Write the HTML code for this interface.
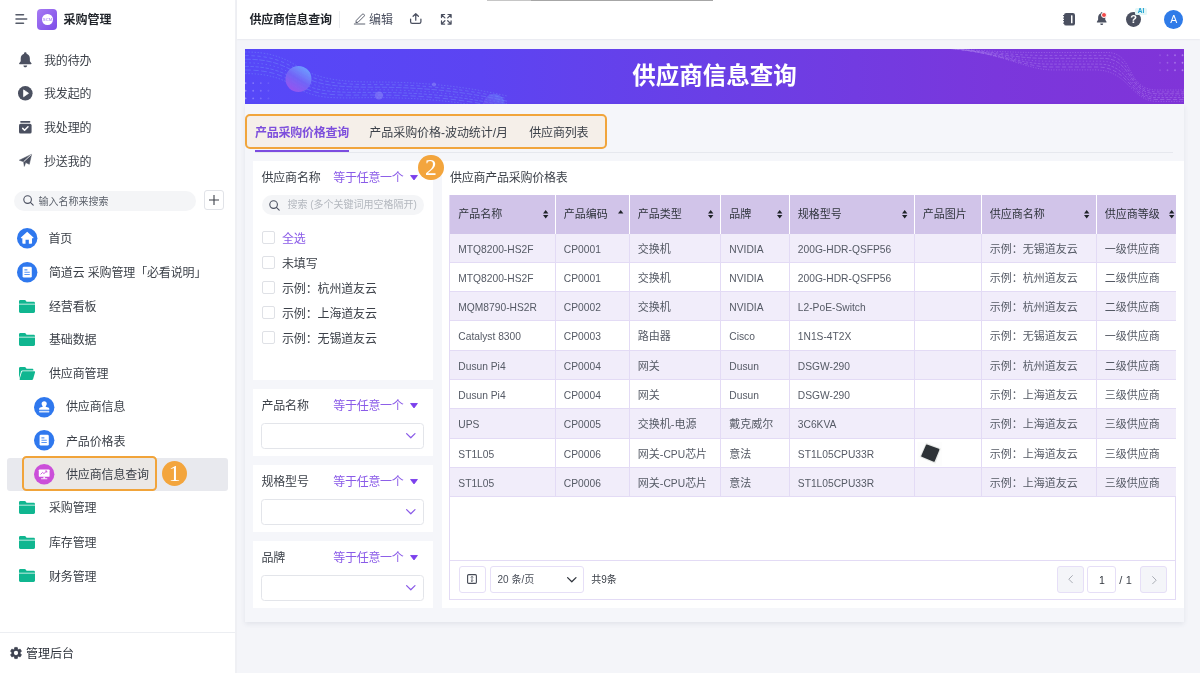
<!DOCTYPE html>
<html lang="zh-CN">
<head>
<meta charset="utf-8">
<title>供应商信息查询</title>
<style>
*{box-sizing:border-box;margin:0;padding:0}
html,body{width:1200px;height:673px;overflow:hidden}
body{position:relative;will-change:transform;background:#f4f5f9;font-family:"Liberation Sans","Noto Sans CJK SC",sans-serif;font-size:12px;color:#3c4149;line-height:1}
.abs{position:absolute}
.t{position:absolute;white-space:nowrap;line-height:16px;height:16px}
svg{position:absolute;display:block;overflow:visible}
/* sidebar */
#side{position:absolute;left:0;top:0;width:237px;height:673px;background:#fff;border-right:2px solid #eff0f4}
.mi{color:#3c4149;letter-spacing:-.15px}
/* header */
#head{position:absolute;left:237px;top:0;width:963px;height:39.200px;background:#fff;box-shadow:0 1px 1.500px rgba(60,70,100,.06)}
/* main */
#banner{position:absolute;left:245px;top:49px;width:939px;height:54.500px;overflow:hidden;background:linear-gradient(90deg,#5648f8 0%,#5c44f2 25%,#6a3fe6 50%,#7a37dc 80%,#8034d8 100%)}
#card{position:absolute;left:245px;top:103.500px;width:939px;height:518.500px;background:#f5f6fa;box-shadow:0 2px 5px rgba(40,50,90,.09)}
.panel{position:absolute;background:#fff}
.pur{color:#8a55e6}
.lbl{color:#3c4149;letter-spacing:-.15px}
.cb{position:absolute;left:261.500px;width:13.400px;height:13.400px;border:1px solid #dfe1e6;border-radius:2px;background:#fff}
.sel{position:absolute;left:261px;width:163.300px;height:26.600px;border:1px solid #e3e5ea;border-radius:3.500px;background:#fff}
.ph{position:absolute;left:450px;height:38.400px;top:195.200px;background:#d1c4e9}
.tr{position:absolute;left:450px;width:725.500px;overflow:hidden;height:29.280px}
.tc{position:absolute;top:0;height:100%;border-right:1px solid #e3dbf5;border-bottom:1px solid #e3dbf5;padding-left:8.300px;font-size:11px;line-height:30.800px;white-space:nowrap;color:#555a65;overflow:hidden}
.tc i{font-style:normal;font-size:10.250px}
.th{position:absolute;top:195.200px;height:38.400px;padding-left:8.300px;font-size:11px;line-height:39.600px;white-space:nowrap;color:#2f343c;border-right:1px solid #fff}
.pb{position:absolute;top:566px;height:27px;border:1px solid #e6dff7;border-radius:3px;background:#fff}

</style>
</head>
<body>

<!-- ================= SIDEBAR ================= -->
<div id="side">
  <!-- hamburger -->
  <svg style="left:16.300px;top:14px" width="12" height="10" viewBox="0 0 12 10"><path d="M0 .750H7.500M0 5H10.700M0 9.250H7.500" stroke="#555b69" stroke-width="1.500" stroke-linecap="round" fill="none"/></svg>
  <!-- logo -->
  <div class="abs" style="left:37px;top:9px;width:20.200px;height:20.600px;border-radius:4px;background:linear-gradient(135deg,#a77bf3,#7c4be8)"></div>
  <div class="abs" style="left:42.100px;top:13.900px;width:10.800px;height:10.800px;border-radius:50%;background:#fff"></div>
  <div class="t" style="left:63.5px;top:12px;font-weight:bold;color:#1f2329;font-size:12px">采购管理</div>

  <div class="t mi" style="left:44px;top:52.5px">我的待办</div>
  <div class="t mi" style="left:44px;top:86px">我发起的</div>
  <div class="t mi" style="left:44px;top:120px">我处理的</div>
  <div class="t mi" style="left:44px;top:153.5px">抄送我的</div>

  <!-- search -->
  <div class="abs" style="left:14px;top:191px;width:182px;height:20px;border-radius:10px;background:#f4f5f7"></div>
  <div class="t" style="left:38.5px;top:193.5px;font-size:10px;color:#5b616b">输入名称来搜索</div>
  <div class="abs" style="left:204px;top:190px;width:20px;height:20px;border:1px solid #e1e3e8;border-radius:3px;background:#fff"></div>


  <!-- logo text -->
  <div class="t" style="left:42.100px;top:14.600px;width:10.800px;height:10.800px;line-height:10.800px;text-align:center;font-size:4.300px;font-weight:bold;color:#b79cf5;letter-spacing:-.1px">SCM</div>
  <!-- bell -->
  <svg style="left:18.200px;top:51.600px" width="14.600" height="15.600" viewBox="0 0 14 15"><path d="M7 0.2c.7 0 1.2.5 1.2 1.1v.4c2 .6 3.200 2.300 3.200 4.500v2.600l1.500 2.100c.3.400 0 .9-.5.9H1.600c-.5 0-.8-.5-.5-.9l1.500-2.100V6.200c0-2.200 1.200-3.900 3.200-4.500v-.4C5.800.7 6.300.2 7 .2z" fill="#4b5060"/><path d="M5.200 12.900h3.600c0 1-.8 1.800-1.800 1.800s-1.800-.8-1.800-1.800z" fill="#4b5060"/></svg>
  <!-- play -->
  <svg style="left:18px;top:86px" width="14.600" height="14.600" viewBox="0 0 14.600 14.600"><circle cx="7.300" cy="7.300" r="7.300" fill="#4b5060"/><path d="M5.600 3.900L10.500 7.300L5.600 10.700z" fill="#fff" stroke="#fff" stroke-width=".8" stroke-linejoin="round"/></svg>
  <!-- processed -->
  <svg style="left:19px;top:120.500px" width="12.600" height="12.500" viewBox="0 0 12.600 12.500"><rect x="1.200" y="0" width="10.200" height="1.700" rx=".8" fill="#4b5060"/><rect x="0" y="2.800" width="12.600" height="9.700" rx="1.600" fill="#4b5060"/><path d="M3.700 7.400L5.600 9.300L9 5.800" stroke="#fff" stroke-width="1.500" fill="none" stroke-linecap="round" stroke-linejoin="round"/></svg>
  <!-- plane -->
  <svg style="left:19px;top:154px" width="12.800" height="12.800" viewBox="0 0 12.800 12.800"><path d="M12.600.3L10.300 10.300L6.700 8.600L5.300 12.400L4.600 7.800L.3 6.200z" fill="#4b5060" stroke="#4b5060" stroke-width=".5" stroke-linejoin="round"/><path d="M12.400.5L4.700 7.700" stroke="#fff" stroke-width=".9"/></svg>
  <!-- search icon -->
  <svg style="left:23px;top:195px" width="11" height="11" viewBox="0 0 11 11"><circle cx="4.600" cy="4.600" r="3.800" stroke="#4b5060" stroke-width="1.100" fill="none"/><path d="M7.400 7.400L10.200 10.200" stroke="#4b5060" stroke-width="1.100" stroke-linecap="round"/></svg>
  <!-- plus -->
  <svg style="left:209px;top:195px" width="10" height="10" viewBox="0 0 10 10"><path d="M5 0V10M0 5H10" stroke="#3c4149" stroke-width="1.100"/></svg>

  <!-- home -->
  <svg style="left:16.700px;top:228.100px" width="20.400" height="20.400" viewBox="0 0 20.400 20.400"><circle cx="10.200" cy="10.200" r="10.200" fill="#2f78ee"/><path transform="translate(10.2 10.2) scale(1.1) translate(-10.2 -10.2)" d="M10.200 4.300L15.900 9.600C16.100 9.800 16 10.200 15.700 10.200H14.600V14.600C14.600 15 14.300 15.300 13.900 15.300H11.700V11.700H8.700V15.300H6.500C6.100 15.300 5.800 15 5.800 14.600V10.200H4.700C4.400 10.200 4.300 9.800 4.500 9.600Z" fill="#fff"/></svg>
  <svg style="left:16.7px;top:262px" width="20.400" height="20.400" viewBox="0 0 20.400 20.400"><circle cx="10.200" cy="10.200" r="10.200" fill="#2f78ee"/><rect x="5.600" y="4.800" width="9.200" height="10.800" rx="1.300" fill="#fff"/><path d="M7.400 7.900H10.400M7.400 10.200H12.800M7.400 12.500H12.800" stroke="#5b97f5" stroke-width="1.100"/></svg>
  <svg style="left:19px;top:299.7px" width="16" height="13" viewBox="0 0 16 13"><path d="M1.300 0H5.600C6.200 0 6.600.3 6.900.8L7.500 1.800H14.700C15.400 1.800 16 2.400 16 3.100V3.700H0V1.300C0 .6.600 0 1.300 0Z" fill="#10b690"/><path d="M0 4.500H16V11.500C16 12.300 15.400 12.900 14.600 12.900H1.400C.6 12.900 0 12.300 0 11.500Z" fill="#10b690"/></svg>
  <svg style="left:19px;top:333.2px" width="16" height="13" viewBox="0 0 16 13"><path d="M1.300 0H5.600C6.200 0 6.600.3 6.900.8L7.500 1.800H14.700C15.400 1.800 16 2.400 16 3.100V3.700H0V1.300C0 .6.600 0 1.300 0Z" fill="#10b690"/><path d="M0 4.500H16V11.500C16 12.300 15.400 12.900 14.600 12.900H1.400C.6 12.900 0 12.300 0 11.500Z" fill="#10b690"/></svg>
  <svg style="left:19px;top:367px" width="16" height="13" viewBox="0 0 16 13"><path d="M1.300 0H5.600C6.200 0 6.600.3 6.900.8L7.500 1.800H13.200C13.900 1.800 14.400 2.300 14.400 3V3.400H3.600C2.800 3.400 2.200 3.900 2 4.600L0 11.500V1.300C0 .6.600 0 1.300 0Z" fill="#10b690"/><path d="M3.800 4.300H15.200C15.800 4.300 16.200 4.800 16 5.400L14.100 12C13.900 12.500 13.500 12.900 12.900 12.900H1.100C.8 12.900.5 12.600.6 12.200L2.700 5.200C2.800 4.700 3.300 4.300 3.800 4.300Z" fill="#10b690"/></svg>
  <!-- stamp/user -->
  <svg style="left:33.600px;top:396.500px" width="20.400" height="20.400" viewBox="0 0 20.400 20.400"><circle cx="10.200" cy="10.200" r="10.200" fill="#2f78ee"/><path d="M10.200 4.200C11.700 4.200 12.800 5.300 12.800 6.700C12.800 7.600 12.300 8.300 11.900 8.900C11.600 9.400 11.800 9.900 12.400 10.100L14.200 10.500C14.900 10.700 15.300 11.200 15.300 11.900V12.800H5.100V11.900C5.100 11.200 5.500 10.700 6.200 10.500L8 10.100C8.600 9.900 8.800 9.400 8.500 8.900C8.100 8.300 7.600 7.600 7.600 6.700C7.600 5.300 8.700 4.200 10.200 4.200Z" fill="#fff"/><rect x="5.100" y="13.800" width="10.200" height="1.700" rx=".4" fill="#fff" opacity=".8"/></svg>
  <svg style="left:33.6px;top:430px" width="20.400" height="20.400" viewBox="0 0 20.400 20.400"><circle cx="10.200" cy="10.200" r="10.200" fill="#2f78ee"/><rect x="5.600" y="4.800" width="9.200" height="10.800" rx="1.300" fill="#fff"/><path d="M7.400 7.900H10.400M7.400 10.200H12.800M7.400 12.500H12.800" stroke="#5b97f5" stroke-width="1.100"/></svg>
  <div class="t mi" style="left:48.5px;top:231px">首页</div>
  <div class="t mi" style="left:49px;top:265px">简道云 采购管理「必看说明」</div>
  <div class="t mi" style="left:49px;top:299px">经营看板</div>
  <div class="t mi" style="left:49px;top:332px">基础数据</div>
  <div class="t mi" style="left:49px;top:366px">供应商管理</div>
  <div class="t mi" style="left:66px;top:399px">供应商信息</div>
  <div class="t mi" style="left:66px;top:433.5px">产品价格表</div>

  <div class="abs" style="left:7px;top:458px;width:221px;height:33px;border-radius:3px;background:#e8e9ee"></div>
  <div class="abs" style="left:22px;top:456px;width:135px;height:35px;border-radius:4.500px;border:2.300px solid #f1a43a;background:#ebe8e5"></div>
  <div class="t mi" style="left:66px;top:467px">供应商信息查询</div>
  <div class="abs" style="left:162px;top:461px;width:25px;height:25px;border-radius:50%;background:#f3a53d"></div>
  <div class="t" style="left:162px;top:461px;width:25px;height:25px;line-height:25px;text-align:center;color:#fff;font-family:'Liberation Serif',serif;font-size:23.500px">1</div>


  <!-- dashboard icon -->
  <svg style="left:33.600px;top:463.500px" width="20.400" height="20.400" viewBox="0 0 20.400 20.400"><circle cx="10.200" cy="10.200" r="10.200" fill="#cb4fd9"/><rect x="4.800" y="5.400" width="10.800" height="7.400" rx=".9" fill="#fff"/><path d="M6.600 10.400L8.600 8.400L9.900 9.600L12.600 7.200M11.200 7H12.800V8.600" stroke="#cb4fd9" stroke-width=".9" fill="none"/><path d="M9.300 12.800H11.100V14.200H13.300V15.300H7.100V14.200H9.300Z" fill="#fff" opacity=".85"/></svg>
<svg style="left:19px;top:501.2px" width="16" height="13" viewBox="0 0 16 13"><path d="M1.300 0H5.600C6.200 0 6.600.3 6.900.8L7.500 1.800H14.700C15.400 1.800 16 2.400 16 3.100V3.700H0V1.300C0 .6.600 0 1.300 0Z" fill="#10b690"/><path d="M0 4.500H16V11.500C16 12.300 15.400 12.900 14.600 12.900H1.400C.6 12.900 0 12.300 0 11.500Z" fill="#10b690"/></svg>
  <svg style="left:19px;top:535.5px" width="16" height="13" viewBox="0 0 16 13"><path d="M1.300 0H5.600C6.200 0 6.600.3 6.900.8L7.500 1.800H14.700C15.400 1.800 16 2.400 16 3.100V3.700H0V1.300C0 .6.600 0 1.300 0Z" fill="#10b690"/><path d="M0 4.500H16V11.500C16 12.300 15.400 12.900 14.600 12.900H1.400C.6 12.900 0 12.300 0 11.500Z" fill="#10b690"/></svg>
  <svg style="left:19px;top:569.2px" width="16" height="13" viewBox="0 0 16 13"><path d="M1.300 0H5.600C6.200 0 6.600.3 6.900.8L7.500 1.800H14.700C15.400 1.800 16 2.400 16 3.100V3.700H0V1.300C0 .6.600 0 1.300 0Z" fill="#10b690"/><path d="M0 4.500H16V11.500C16 12.300 15.400 12.900 14.600 12.900H1.400C.6 12.900 0 12.300 0 11.500Z" fill="#10b690"/></svg>
  <!-- gear -->
  <svg style="left:9.800px;top:646.600px" width="12" height="12" viewBox="0 0 12 12"><path d="M4.33 2.25L4.72 0.45L7.28 0.45L7.67 2.25L8.41 2.68L10.17 2.11L11.45 4.33L10.08 5.57L10.08 6.43L11.45 7.67L10.17 9.89L8.41 9.32L7.67 9.75L7.28 11.55L4.72 11.55L4.33 9.75L3.59 9.32L1.83 9.89L0.55 7.67L1.92 6.43L1.92 5.57L0.55 4.33L1.83 2.11L3.59 2.68Z" fill="#3d4250" stroke="#3d4250" stroke-width=".7" stroke-linejoin="round"/><circle cx="6" cy="6" r="2.150" fill="#fff"/></svg>
  <div class="t mi" style="left:49px;top:500px">采购管理</div>
  <div class="t mi" style="left:49px;top:535px">库存管理</div>
  <div class="t mi" style="left:49px;top:568.5px">财务管理</div>

  <div class="abs" style="left:0;top:632px;width:235px;height:1px;background:#eceef2"></div>
  <div class="t" style="left:26px;top:646px;color:#2b3039">管理后台</div>
</div>

<!-- ================= HEADER ================= -->
<div id="head"></div>
<div class="abs" style="left:487px;top:0;width:226px;height:1px;background:linear-gradient(90deg,#c6c6c6 0,#c6c6c6 44px,#a6a6a6 44px)"></div>
<div class="t" style="left:249.500px;top:12px;font-weight:bold;color:#1f2329;letter-spacing:-.25px">供应商信息查询</div>
<div class="abs" style="left:339px;top:11px;width:1px;height:17px;background:#ebedf0"></div>
<!-- pencil -->
<svg style="left:354px;top:13px" width="11.500" height="11.500" viewBox="0 0 11.500 11.500"><path d="M2.300 7.400L8.300 1.200C8.700.8 9.300.8 9.700 1.200L10.200 1.700C10.600 2.100 10.600 2.700 10.200 3.100L4.100 9.200L1.900 9.700Z" stroke="#4b5060" stroke-width=".9" fill="none" stroke-linejoin="round"/><path d="M.3 11H10.800" stroke="#4b5060" stroke-width=".9" stroke-linecap="round"/></svg>
<div class="t" style="left:369px;top:12px;color:#4b5060">编辑</div>
<!-- upload -->
<svg style="left:409.500px;top:13.300px" width="11.500" height="11" viewBox="0 0 11.500 11"><path d="M5.750 7.200V.8M3.100 3.300L5.750.7L8.400 3.300" stroke="#4b5060" stroke-width="1.250" fill="none" stroke-linecap="round" stroke-linejoin="round"/><path d="M.6 6V8.800C.6 9.700 1.300 10.400 2.200 10.400H9.300C10.200 10.400 10.900 9.700 10.900 8.800V6" stroke="#4b5060" stroke-width="1.250" fill="none" stroke-linecap="round"/></svg>
<!-- fullscreen -->
<svg style="left:440.500px;top:13.500px" width="10.600" height="10.600" viewBox="0 0 10.600 10.600"><path d="M.5 3.600V.5H3.600M.7.700L3.900 3.900M7 .5H10.100V3.600M9.900.7L6.700 3.900M.5 7V10.100H3.600M.7 9.900L3.900 6.700M10.100 7V10.100H7M9.900 9.900L6.700 6.700" stroke="#4b5060" stroke-width="1.250" fill="none" stroke-linecap="round" stroke-linejoin="round"/></svg>
<!-- notebook -->
<svg style="left:1063px;top:12.500px" width="12" height="12.600" viewBox="0 0 12 12.600"><rect x="1" y="0" width="11" height="12.600" rx="2.200" fill="#4b5060"/><path d="M0 2.600H2M0 5.100H2M0 7.600H2M0 10.100H2" stroke="#4b5060" stroke-width="1"/><rect x="8" y="2.300" width="1.500" height="8" rx=".4" fill="#fff"/></svg>
<!-- bell -->
<svg style="left:1095.500px;top:12.400px" width="11.400" height="13.400" viewBox="0 0 14 15" preserveAspectRatio="none"><path d="M7 0.200c.7 0 1.200.5 1.200 1.100v.4c2 .6 3.200 2.300 3.200 4.500v2.600l1.500 2.100c.3.400 0 .9-.5.900H1.600c-.5 0-.8-.5-.5-.9l1.500-2.100V6.200c0-2.200 1.200-3.900 3.200-4.500v-.4C5.800.7 6.300.2 7 .2z" fill="#4b5060"/><path d="M5.200 12.900h3.600c0 1-.8 1.800-1.800 1.800s-1.800-.8-1.800-1.800z" fill="#4b5060"/></svg>
<div class="abs" style="left:1100.700px;top:11.600px;width:6.400px;height:6.400px;border-radius:50%;background:#f04848;border:.6px solid #fff"></div>
<!-- help -->
<div class="abs" style="left:1126.200px;top:12px;width:14.800px;height:14.800px;border-radius:50%;background:#4b5060"></div>
<div class="t" style="left:1126.200px;top:12px;width:14.800px;height:14.800px;line-height:15.500px;text-align:center;color:#fff;font-weight:bold;font-size:11px">?</div>
<div class="abs" style="left:1135px;top:8.300px;width:12.200px;height:6.400px;border-radius:1.500px;background:#e2f6f7"></div>
<div class="t" style="left:1135px;top:8.300px;width:12.200px;height:6.400px;line-height:6.800px;text-align:center;color:#1a9fd0;font-weight:bold;font-size:6.500px">AI</div>
<!-- avatar -->
<div class="abs" style="left:1164.400px;top:10px;width:18.800px;height:18.800px;border-radius:50%;background:#2f7be8"></div>
<div class="t" style="left:1164.400px;top:10px;width:18.800px;height:18.800px;line-height:19.500px;text-align:center;color:#fff;font-size:10.500px">A</div>

<!-- ================= BANNER ================= -->
<div id="banner">
<svg style="left:0;top:0" width="939" height="55" viewBox="0 0 939 55">
  <defs>
    <linearGradient id="sph" x1=".8" y1=".1" x2=".25" y2=".95"><stop offset="0" stop-color="#6fa4ff"/><stop offset=".5" stop-color="#7466f6"/><stop offset="1" stop-color="#9c56ee"/></linearGradient>
  </defs>
  <g fill="none" stroke="#8fd0ff" stroke-width=".7" opacity=".34"><path d="M0 3.0C22 3.0 36 7.0 52 17.0C72 30.0 95 33.0 130 33.0C170 33.0 215 36.0 262 47.0" stroke-dasharray="1.5 1.6"/><path d="M0 6.6C22 6.6 36 10.6 52 20.6C72 33.6 95 35.6 130 35.6C170 35.6 215 38.6 262 49.6" stroke-dasharray="3.5 2.6"/><path d="M0 10.2C22 10.2 36 14.2 52 24.2C72 37.2 95 38.2 130 38.2C170 38.2 215 41.2 262 52.2" stroke-dasharray="5.5 1.6"/><path d="M0 13.8C22 13.8 36 17.8 52 27.8C72 40.8 95 40.8 130 40.8C170 40.8 215 43.8 262 54.8" stroke-dasharray="1.5 2.6"/><path d="M0 17.4C22 17.4 36 21.4 52 31.4C72 44.4 95 43.4 130 43.4C170 43.4 215 46.4 262 57.4" stroke-dasharray="3.5 1.6"/><path d="M0 21.0C22 21.0 36 25.0 52 35.0C72 48.0 95 46.0 130 46.0C170 46.0 215 49.0 262 60.0" stroke-dasharray="5.5 2.6"/><path d="M0 24.6C22 24.6 36 28.6 52 38.6C72 51.6 95 48.6 130 48.6C170 48.6 215 51.6 262 62.6" stroke-dasharray="1.5 1.6"/></g>
  <g fill="#b9b4ff" opacity=".6"><circle cx="0.6" cy="34.1" r=".95" opacity="1.00"/><circle cx="8.2" cy="34.1" r=".95" opacity="0.78"/><circle cx="15.8" cy="34.1" r=".95" opacity="0.56"/><circle cx="23.4" cy="34.1" r=".95" opacity="0.34"/><circle cx="0.6" cy="41.8" r=".95" opacity="1.00"/><circle cx="8.2" cy="41.8" r=".95" opacity="0.78"/><circle cx="15.8" cy="41.8" r=".95" opacity="0.56"/><circle cx="23.4" cy="41.8" r=".95" opacity="0.34"/><circle cx="0.6" cy="49.4" r=".95" opacity="1.00"/><circle cx="8.2" cy="49.4" r=".95" opacity="0.78"/><circle cx="15.8" cy="49.4" r=".95" opacity="0.56"/><circle cx="23.4" cy="49.4" r=".95" opacity="0.34"/></g>
  <circle cx="53.500" cy="30" r="13" fill="url(#sph)" opacity=".92"/>
  <circle cx="134" cy="46.500" r="4" fill="#8f8cf8" opacity=".5"/>
  <circle cx="189" cy="35.500" r="2" fill="#8f8cf8" opacity=".55"/>
  <circle cx="249" cy="56" r="11" fill="url(#sph)" opacity=".38"/>
  <g fill="none" stroke="#d9c4ff" stroke-width=".6" opacity=".42"><path d="M700 -1.0C740 2.0 765 3.5 795 3.5L862 3.5C890 3.5 880 41.0 912 41.0L939 41.0" stroke-dasharray="1.2 1.4"/><path d="M702 -0.8C743 2.5 768 6.4 797 6.4L860 6.4C889 6.4 881 42.9 912 42.9L939 42.9" stroke-dasharray="2.7 2.2"/><path d="M704 -0.6C746 3.0 771 9.3 799 9.3L858 9.3C888 9.3 882 44.8 912 44.8L939 44.8" stroke-dasharray="4.2 1.4"/><path d="M706 -0.4C749 3.5 774 12.2 801 12.2L856 12.2C887 12.2 883 46.7 912 46.7L939 46.7" stroke-dasharray="1.2 2.2"/><path d="M708 -0.2C752 4.0 777 15.1 803 15.1L854 15.1C886 15.1 884 48.6 912 48.6L939 48.6" stroke-dasharray="2.7 1.4"/><path d="M710 0.0C755 4.5 780 18.0 805 18.0L852 18.0C885 18.0 885 50.5 912 50.5L939 50.5" stroke-dasharray="4.2 2.2"/><path d="M712 0.2C758 5.0 783 20.9 807 20.9L850 20.9C884 20.9 886 52.4 912 52.4L939 52.4" stroke-dasharray="1.2 1.4"/></g>
  <g fill="#d9c4ff" opacity=".55"><circle cx="915.0" cy="6.25" r=".9" opacity="0.35"/><circle cx="922.5" cy="6.25" r=".9" opacity="0.55"/><circle cx="930.0" cy="6.25" r=".9" opacity="0.75"/><circle cx="937.5" cy="6.25" r=".9" opacity="0.95"/><circle cx="915.0" cy="13.75" r=".9" opacity="0.35"/><circle cx="922.5" cy="13.75" r=".9" opacity="0.55"/><circle cx="930.0" cy="13.75" r=".9" opacity="0.75"/><circle cx="937.5" cy="13.75" r=".9" opacity="0.95"/><circle cx="915.0" cy="21.25" r=".9" opacity="0.35"/><circle cx="922.5" cy="21.25" r=".9" opacity="0.55"/><circle cx="930.0" cy="21.25" r=".9" opacity="0.75"/><circle cx="937.5" cy="21.25" r=".9" opacity="0.95"/></g>
</svg>
  <div class="t" style="left:0;width:939px;top:12px;height:30px;line-height:30px;text-align:center;color:#fff;font-weight:bold;font-size:23.5px">供应商信息查询</div>
</div>

<!-- ================= CARD ================= -->
<div id="card"></div>

<!-- tabs -->
<div class="abs" style="left:245px;top:114.300px;width:361.500px;height:35px;border:2.300px solid #f1a53c;border-radius:5px;background:#f5efe9"></div>
<div class="t" style="left:255px;top:124.500px;font-weight:bold;color:#7d4fdc;letter-spacing:-.25px">产品采购价格查询</div>
<div class="t lbl" style="left:369.300px;top:124.500px;letter-spacing:-.05px">产品采购价格-波动统计/月</div>
<div class="t lbl" style="left:529.300px;top:124.500px;letter-spacing:-.2px">供应商列表</div>
<div class="abs" style="left:255px;top:152px;width:918px;height:1px;background:#e6e8ee"></div>
<div class="abs" style="left:255px;top:149.500px;width:94px;height:2.500px;background:#7c4ce0"></div>

<!-- filter 1 -->
<div class="panel" style="left:253px;top:161px;width:180px;height:219px"></div>
<div class="t lbl" style="left:261.500px;top:170.100px;letter-spacing:-.2px">供应商名称</div>
<div class="t" style="left:333.300px;top:170.100px;color:#8a5be8;letter-spacing:-.3px">等于任意一个</div>
<svg style="left:409.6px;top:175.4px" width="8" height="5.400" viewBox="0 0 8 5.400"><path d="M.6.500H7.400L4 4.900Z" fill="#7b3fec" stroke="#7b3fec" stroke-width=".9" stroke-linejoin="round"/></svg>
<div class="abs" style="left:261.500px;top:195px;width:162.500px;height:19.500px;border-radius:10px;background:#f4f5f7"></div>
<svg style="left:269.300px;top:199.500px" width="11" height="11" viewBox="0 0 11 11"><circle cx="4.600" cy="4.600" r="3.800" stroke="#4b5060" stroke-width="1.100" fill="none"/><path d="M7.400 7.400L10.200 10.200" stroke="#4b5060" stroke-width="1.100" stroke-linecap="round"/></svg>
<div class="t" style="left:287.500px;top:197px;font-size:10px;color:#b4b8bf;letter-spacing:0">搜索 (多个关键词用空格隔开)</div>
<div class="cb" style="top:230.6px"></div><div class="t lbl" style="left:282px;top:230.8px;color:#8a5be8">全选</div>
<div class="cb" style="top:255.6px"></div><div class="t lbl" style="left:282px;top:255.8px;">未填写</div>
<div class="cb" style="top:280.6px"></div><div class="t lbl" style="left:282px;top:280.8px;">示例：杭州道友云</div>
<div class="cb" style="top:305.6px"></div><div class="t lbl" style="left:282px;top:305.8px;">示例：上海道友云</div>
<div class="cb" style="top:330.6px"></div><div class="t lbl" style="left:282px;top:330.8px;">示例：无锡道友云</div>

<!-- filter 2 -->
<div class="panel" style="left:253px;top:389px;width:180px;height:67px"></div>
<div class="t lbl" style="left:261.500px;top:397.7px;letter-spacing:-.2px">产品名称</div>
<div class="t" style="left:333.300px;top:397.7px;color:#8a5be8;letter-spacing:-.3px">等于任意一个</div>
<svg style="left:409.6px;top:403.3px" width="8" height="5.400" viewBox="0 0 8 5.400"><path d="M.6.500H7.400L4 4.900Z" fill="#7b3fec" stroke="#7b3fec" stroke-width=".9" stroke-linejoin="round"/></svg>
<div class="sel" style="top:422.6px"></div>
<svg style="left:406px;top:433.3px" width="9.600" height="5.600" viewBox="0 0 9.600 5.600"><path d="M.6.600L4.800 4.800L9 .600" stroke="#8a5be8" stroke-width="1.250" fill="none" stroke-linecap="round" stroke-linejoin="round"/></svg>

<!-- filter 3 -->
<div class="panel" style="left:253px;top:465px;width:180px;height:67px"></div>
<div class="t lbl" style="left:261.500px;top:473.7px;letter-spacing:-.2px">规格型号</div>
<div class="t" style="left:333.300px;top:473.7px;color:#8a5be8;letter-spacing:-.3px">等于任意一个</div>
<svg style="left:409.6px;top:479.3px" width="8" height="5.400" viewBox="0 0 8 5.400"><path d="M.6.500H7.400L4 4.900Z" fill="#7b3fec" stroke="#7b3fec" stroke-width=".9" stroke-linejoin="round"/></svg>
<div class="sel" style="top:498.6px"></div>
<svg style="left:406px;top:509.3px" width="9.600" height="5.600" viewBox="0 0 9.600 5.600"><path d="M.6.600L4.800 4.800L9 .600" stroke="#8a5be8" stroke-width="1.250" fill="none" stroke-linecap="round" stroke-linejoin="round"/></svg>

<!-- filter 4 -->
<div class="panel" style="left:253px;top:541px;width:180px;height:67px"></div>
<div class="t lbl" style="left:261.500px;top:549.7px;letter-spacing:-.2px">品牌</div>
<div class="t" style="left:333.300px;top:549.7px;color:#8a5be8;letter-spacing:-.3px">等于任意一个</div>
<svg style="left:409.6px;top:555.3px" width="8" height="5.400" viewBox="0 0 8 5.400"><path d="M.6.500H7.400L4 4.900Z" fill="#7b3fec" stroke="#7b3fec" stroke-width=".9" stroke-linejoin="round"/></svg>
<div class="sel" style="top:574.6px"></div>
<svg style="left:406px;top:585.3px" width="9.600" height="5.600" viewBox="0 0 9.600 5.600"><path d="M.6.600L4.800 4.800L9 .600" stroke="#8a5be8" stroke-width="1.250" fill="none" stroke-linecap="round" stroke-linejoin="round"/></svg>

<!-- table panel -->
<div class="panel" style="left:441.500px;top:161px;width:742.500px;height:447px"></div>
<div class="t lbl" style="left:450px;top:170.300px;letter-spacing:-.25px">供应商产品采购价格表</div>
<div class="abs" style="left:449.300px;top:195px;width:727.200px;height:404.500px;border:1px solid #e3dbf5;border-top:none"></div>
<div class="abs" style="left:450px;top:560px;width:726px;height:1px;background:#e3dbf5"></div>
<div class="ph" style="width:726px"></div>
<div class="th" style="left:450px;width:105.5px;">产品名称</div><svg style="left:542.8px;top:209.800px" width="5.400" height="8.400" viewBox="0 0 5.400 8.400"><path d="M2.700 0L5.400 3.500H0Z M2.700 8.400L5.400 4.900H0Z" fill="#1f2329"/></svg>
<div class="th" style="left:555.5px;width:74.0px;">产品编码</div><svg style="left:617.8px;top:209.800px" width="5.400" height="3.500" viewBox="0 0 5.400 3.500"><path d="M2.700 0L5.400 3.500H0Z" fill="#1f2329"/></svg>
<div class="th" style="left:629.5px;width:91.5px;">产品类型</div><svg style="left:708.3px;top:209.800px" width="5.400" height="8.400" viewBox="0 0 5.400 8.400"><path d="M2.700 0L5.400 3.500H0Z M2.700 8.400L5.400 4.900H0Z" fill="#1f2329"/></svg>
<div class="th" style="left:721px;width:68.5px;">品牌</div><svg style="left:776.8px;top:209.800px" width="5.400" height="8.400" viewBox="0 0 5.400 8.400"><path d="M2.700 0L5.400 3.500H0Z M2.700 8.400L5.400 4.900H0Z" fill="#1f2329"/></svg>
<div class="th" style="left:789.5px;width:125.0px;">规格型号</div><svg style="left:901.8px;top:209.800px" width="5.400" height="8.400" viewBox="0 0 5.400 8.400"><path d="M2.700 0L5.400 3.500H0Z M2.700 8.400L5.400 4.900H0Z" fill="#1f2329"/></svg>
<div class="th" style="left:914.5px;width:67.0px;">产品图片</div>
<div class="th" style="left:981.5px;width:115.0px;">供应商名称</div><svg style="left:1083.8px;top:209.800px" width="5.400" height="8.400" viewBox="0 0 5.400 8.400"><path d="M2.700 0L5.400 3.500H0Z M2.700 8.400L5.400 4.900H0Z" fill="#1f2329"/></svg>
<div class="th" style="left:1096.5px;width:80.0px;border-right:none;">供应商等级</div><svg style="left:1169.3px;top:209.800px" width="5.400" height="8.400" viewBox="0 0 5.400 8.400"><path d="M2.700 0L5.400 3.500H0Z M2.700 8.400L5.400 4.900H0Z" fill="#1f2329"/></svg>
<div class="tr" style="top:233.60px;background:#f1edfa"><div class="tc" style="left:0px;width:105.5px;"><i>MTQ8200-HS2F</i></div><div class="tc" style="left:105.5px;width:74.0px;"><i>CP0001</i></div><div class="tc" style="left:179.5px;width:91.5px;">交换机</div><div class="tc" style="left:271px;width:68.5px;"><i>NVIDIA</i></div><div class="tc" style="left:339.5px;width:125.0px;"><i>200G-HDR-QSFP56</i></div><div class="tc" style="left:464.5px;width:67.0px;"></div><div class="tc" style="left:531.5px;width:115.0px;">示例：无锡道友云</div><div class="tc" style="left:646.5px;width:80.0px;border-right:none;">一级供应商</div></div>
<div class="tr" style="top:262.88px;background:#fff"><div class="tc" style="left:0px;width:105.5px;"><i>MTQ8200-HS2F</i></div><div class="tc" style="left:105.5px;width:74.0px;"><i>CP0001</i></div><div class="tc" style="left:179.5px;width:91.5px;">交换机</div><div class="tc" style="left:271px;width:68.5px;"><i>NVIDIA</i></div><div class="tc" style="left:339.5px;width:125.0px;"><i>200G-HDR-QSFP56</i></div><div class="tc" style="left:464.5px;width:67.0px;"></div><div class="tc" style="left:531.5px;width:115.0px;">示例：杭州道友云</div><div class="tc" style="left:646.5px;width:80.0px;border-right:none;">二级供应商</div></div>
<div class="tr" style="top:292.16px;background:#f1edfa"><div class="tc" style="left:0px;width:105.5px;"><i>MQM8790-HS2R</i></div><div class="tc" style="left:105.5px;width:74.0px;"><i>CP0002</i></div><div class="tc" style="left:179.5px;width:91.5px;">交换机</div><div class="tc" style="left:271px;width:68.5px;"><i>NVIDIA</i></div><div class="tc" style="left:339.5px;width:125.0px;"><i>L2-PoE-Switch</i></div><div class="tc" style="left:464.5px;width:67.0px;"></div><div class="tc" style="left:531.5px;width:115.0px;">示例：杭州道友云</div><div class="tc" style="left:646.5px;width:80.0px;border-right:none;">二级供应商</div></div>
<div class="tr" style="top:321.44px;background:#fff"><div class="tc" style="left:0px;width:105.5px;"><i>Catalyst 8300</i></div><div class="tc" style="left:105.5px;width:74.0px;"><i>CP0003</i></div><div class="tc" style="left:179.5px;width:91.5px;">路由器</div><div class="tc" style="left:271px;width:68.5px;"><i>Cisco</i></div><div class="tc" style="left:339.5px;width:125.0px;"><i>1N1S-4T2X</i></div><div class="tc" style="left:464.5px;width:67.0px;"></div><div class="tc" style="left:531.5px;width:115.0px;">示例：无锡道友云</div><div class="tc" style="left:646.5px;width:80.0px;border-right:none;">一级供应商</div></div>
<div class="tr" style="top:350.72px;background:#f1edfa"><div class="tc" style="left:0px;width:105.5px;"><i>Dusun Pi4</i></div><div class="tc" style="left:105.5px;width:74.0px;"><i>CP0004</i></div><div class="tc" style="left:179.5px;width:91.5px;">网关</div><div class="tc" style="left:271px;width:68.5px;"><i>Dusun</i></div><div class="tc" style="left:339.5px;width:125.0px;"><i>DSGW-290</i></div><div class="tc" style="left:464.5px;width:67.0px;"></div><div class="tc" style="left:531.5px;width:115.0px;">示例：杭州道友云</div><div class="tc" style="left:646.5px;width:80.0px;border-right:none;">二级供应商</div></div>
<div class="tr" style="top:380.00px;background:#fff"><div class="tc" style="left:0px;width:105.5px;"><i>Dusun Pi4</i></div><div class="tc" style="left:105.5px;width:74.0px;"><i>CP0004</i></div><div class="tc" style="left:179.5px;width:91.5px;">网关</div><div class="tc" style="left:271px;width:68.5px;"><i>Dusun</i></div><div class="tc" style="left:339.5px;width:125.0px;"><i>DSGW-290</i></div><div class="tc" style="left:464.5px;width:67.0px;"></div><div class="tc" style="left:531.5px;width:115.0px;">示例：上海道友云</div><div class="tc" style="left:646.5px;width:80.0px;border-right:none;">三级供应商</div></div>
<div class="tr" style="top:409.28px;background:#f1edfa"><div class="tc" style="left:0px;width:105.5px;"><i>UPS</i></div><div class="tc" style="left:105.5px;width:74.0px;"><i>CP0005</i></div><div class="tc" style="left:179.5px;width:91.5px;">交换机-电源</div><div class="tc" style="left:271px;width:68.5px;">戴克威尔</div><div class="tc" style="left:339.5px;width:125.0px;"><i>3C6KVA</i></div><div class="tc" style="left:464.5px;width:67.0px;"></div><div class="tc" style="left:531.5px;width:115.0px;">示例：上海道友云</div><div class="tc" style="left:646.5px;width:80.0px;border-right:none;">三级供应商</div></div>
<div class="tr" style="top:438.56px;background:#fff"><div class="tc" style="left:0px;width:105.5px;"><i>ST1L05</i></div><div class="tc" style="left:105.5px;width:74.0px;"><i>CP0006</i></div><div class="tc" style="left:179.5px;width:91.5px;">网关-<i>CPU</i>芯片</div><div class="tc" style="left:271px;width:68.5px;">意法</div><div class="tc" style="left:339.5px;width:125.0px;"><i>ST1L05CPU33R</i></div><div class="tc" style="left:464.5px;width:67.0px;"><svg style="left:0;top:0" width="30" height="29" viewBox="0 0 30 29"><rect x="2.500" y="2.800" width="24.500" height="24" fill="#fdfdfd"/><path d="M11.300 4.600L25.200 9.800L20 24L5.300 17.800Z" fill="#e3e6e3" stroke="#e3e6e3" stroke-width="1.200" stroke-linejoin="round" opacity=".8"/><path d="M11.700 6.200L23.600 10.600L19 22L7 17Z" fill="#2e3337" stroke="#2e3337" stroke-width="1.600" stroke-linejoin="round"/></svg></div><div class="tc" style="left:531.5px;width:115.0px;">示例：上海道友云</div><div class="tc" style="left:646.5px;width:80.0px;border-right:none;">三级供应商</div></div>
<div class="tr" style="top:467.84px;background:#f1edfa"><div class="tc" style="left:0px;width:105.5px;"><i>ST1L05</i></div><div class="tc" style="left:105.5px;width:74.0px;"><i>CP0006</i></div><div class="tc" style="left:179.5px;width:91.5px;">网关-<i>CPU</i>芯片</div><div class="tc" style="left:271px;width:68.5px;">意法</div><div class="tc" style="left:339.5px;width:125.0px;"><i>ST1L05CPU33R</i></div><div class="tc" style="left:464.5px;width:67.0px;"></div><div class="tc" style="left:531.5px;width:115.0px;">示例：上海道友云</div><div class="tc" style="left:646.5px;width:80.0px;border-right:none;">三级供应商</div></div>

<!-- pagination -->
<div class="pb" style="left:459.300px;width:26.500px"></div>
<svg style="left:467.200px;top:573.700px" width="10" height="10" viewBox="0 0 10 10"><rect x=".6" y=".6" width="8.800" height="8.800" rx="1.100" stroke="#454a55" stroke-width="1.100" fill="none"/><path d="M5 2.400V7.600M3.900 3.500L5 2.400L6.100 3.500M3.900 6.500L5 7.600L6.100 6.500" stroke="#454a55" stroke-width=".8" fill="none"/></svg>
<div class="pb" style="left:490.200px;width:94px"></div>
<div class="t" style="left:497.500px;top:572px;font-size:10px;color:#4a4f5a">20 条/页</div>
<svg style="left:566.6px;top:577.3px" width="9.600" height="5.600" viewBox="0 0 9.600 5.600"><path d="M.6.600L4.800 4.800L9 .600" stroke="#2f343c" stroke-width="1.250" fill="none" stroke-linecap="round" stroke-linejoin="round"/></svg>
<div class="t" style="left:591.300px;top:572px;font-size:10px;color:#3c4149">共9条</div>
<div class="pb" style="left:1056.800px;width:27.500px;background:#f4f5f9"></div>
<svg style="left:1067.600px;top:575.300px" width="5" height="8.400" viewBox="0 0 5 8.400"><path d="M4.400.600L.8 4.200L4.400 7.800" stroke="#a9adb5" stroke-width="1" fill="none" stroke-linecap="round" stroke-linejoin="round"/></svg>
<div class="pb" style="left:1087.200px;width:28.500px"></div>
<div class="t" style="left:1088px;top:572px;width:28px;text-align:center;font-size:10.500px;color:#2f343c">1</div>
<div class="t" style="left:1119.200px;top:572px;font-size:11px;color:#3c4149;word-spacing:.5px">/ 1</div>
<div class="pb" style="left:1140px;width:27.200px;background:#f4f5f9"></div>
<svg style="left:1151.800px;top:575.500px" width="5" height="8.400" viewBox="0 0 5 8.400"><path d="M.6.600L4.200 4.200L.6 7.800" stroke="#a9adb5" stroke-width="1" fill="none" stroke-linecap="round" stroke-linejoin="round"/></svg>

<!-- badge 2 -->
<div class="abs" style="left:418.300px;top:155px;width:25.300px;height:25.300px;border-radius:50%;background:#f3a53d"></div>
<div class="t" style="left:418.300px;top:155px;width:25.300px;height:25.300px;line-height:25px;text-align:center;color:#fff;font-family:'Liberation Serif',serif;font-size:23.500px">2</div>

</body>
</html>
